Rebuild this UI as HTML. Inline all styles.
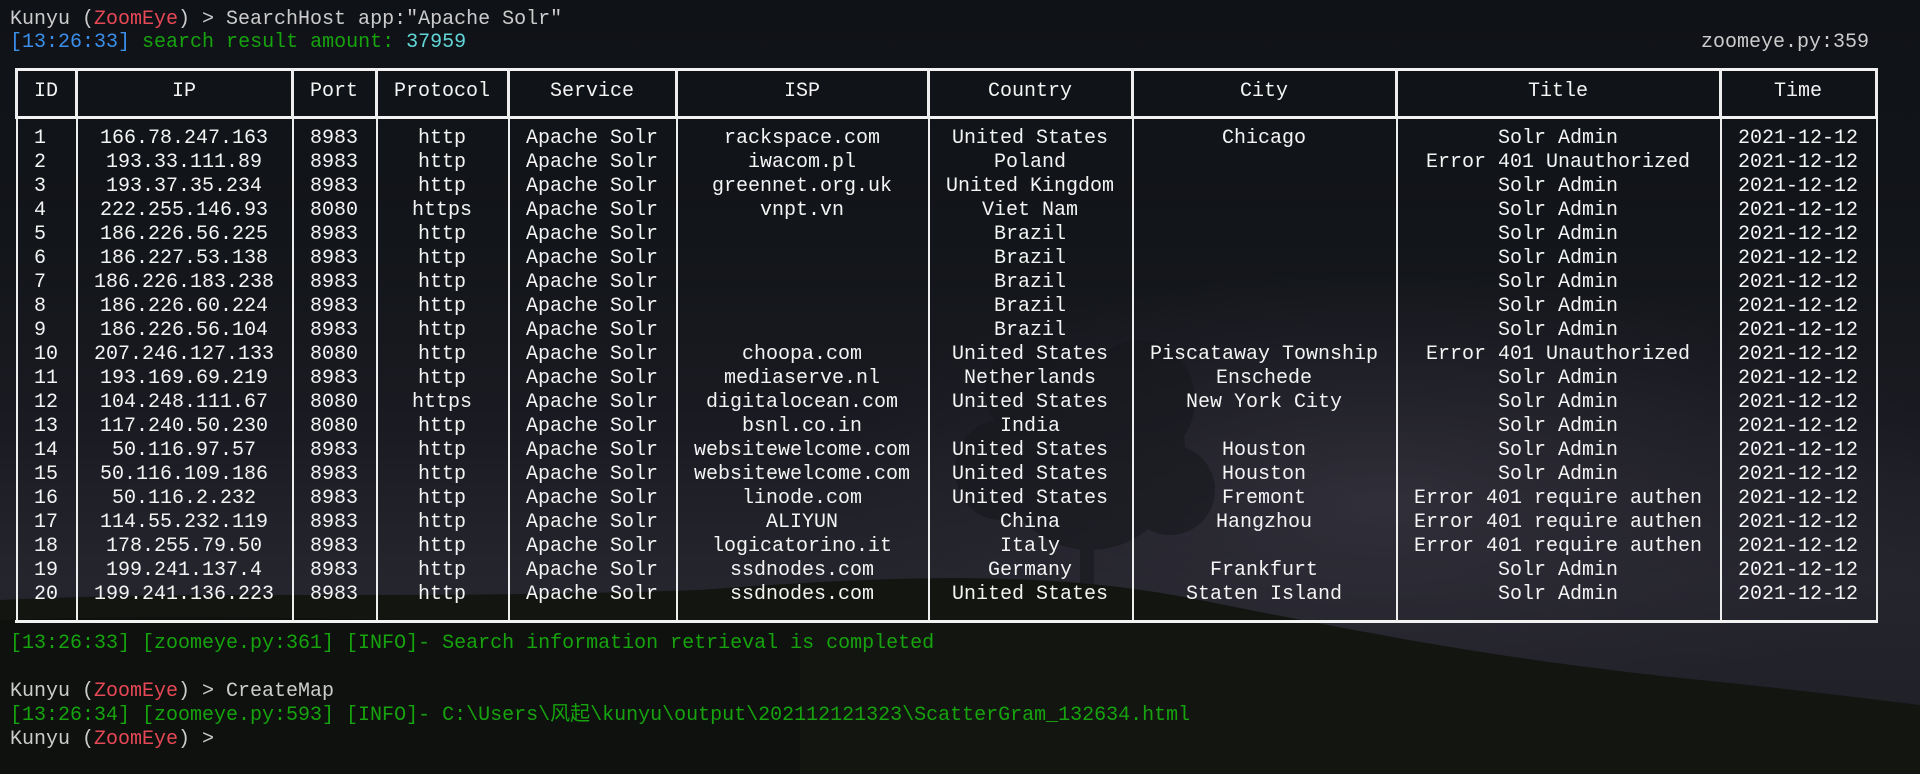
<!DOCTYPE html>
<html><head><meta charset="utf-8"><style>
html,body{margin:0;padding:0;}
body{width:1920px;height:774px;overflow:hidden;position:relative;background:#0f1217;font-family:"Liberation Mono","Noto Sans CJK SC",monospace;font-size:20px;}
.bg{position:absolute;left:0;top:0;}
.l{position:absolute;left:10px;height:24px;line-height:24px;white-space:pre;color:#cccccc;}
.c{position:absolute;height:24px;line-height:24px;white-space:pre;color:#f4f4f4;text-align:center;}
.h{position:absolute;background:#f2f2f2;height:3px;}
.v{position:absolute;background:#eeeeee;}
.r{color:#e74856}.b{color:#3b8eea}.g{color:#16a30e}.cy{color:#61d6d6}
</style></head><body>
<svg class="bg" width="1920" height="774" viewBox="0 0 1920 774">
<defs>
<linearGradient id="sky" x1="0" y1="0" x2="0" y2="1">
<stop offset="0" stop-color="#0f1217"/>
<stop offset="0.3" stop-color="#121519"/>
<stop offset="0.55" stop-color="#1a1b22"/>
<stop offset="0.75" stop-color="#25252e"/>
<stop offset="1" stop-color="#1e1e25"/>
</linearGradient>
<radialGradient id="glow" cx="0.72" cy="0.65" r="0.3">
<stop offset="0" stop-color="#35323d" stop-opacity="0.8"/>
<stop offset="1" stop-color="#2a2933" stop-opacity="0"/>
</radialGradient>
</defs>
<rect width="1920" height="774" fill="url(#sky)"/>
<rect width="1920" height="774" fill="url(#glow)"/>
<g fill="#15171b" opacity="0.55">
<ellipse cx="1090" cy="450" rx="95" ry="100"/>
<ellipse cx="1040" cy="390" rx="55" ry="55"/>
<ellipse cx="1140" cy="400" rx="55" ry="60"/>
<ellipse cx="1000" cy="470" rx="45" ry="50"/>
<ellipse cx="1170" cy="490" rx="45" ry="45"/>
<rect x="1080" y="500" width="14" height="110"/>
</g>
<path d="M0 600 C200 590 400 600 700 590 C900 575 1050 570 1200 600 C1350 630 1500 660 1700 680 C1800 690 1880 700 1920 705 L1920 774 L0 774 Z" fill="#121510"/>
<path d="M0 620 C300 610 500 630 800 620 L800 774 L0 774 Z" fill="#0e110d"/>
</svg>

<div class="l" style="top:8px">Kunyu (<span class="r">ZoomEye</span>) &gt; SearchHost app:"Apache Solr"</div>
<div class="l" style="top:31px"><span class="b">[13:26:33]</span> <span class="g">search result amount:</span> <span class="cy">37959</span></div>
<div class="l" style="top:31px;left:1701px;color:#cccccc">zoomeye.py:359</div>

<div class="h" style="left:15px;width:1863px;top:68px"></div>
<div class="h" style="left:15px;width:1863px;top:116px"></div>
<div class="h" style="left:15px;width:1863px;top:620px"></div>

<div id="vv"></div>
<div id="tbl"></div>

<div class="l g" style="top:632px">[13:26:33] [zoomeye.py:361] [INFO]- Search information retrieval is completed</div>
<div class="l" style="top:680px">Kunyu (<span class="r">ZoomEye</span>) &gt; CreateMap</div>
<div class="l g" style="top:704px">[13:26:34] [zoomeye.py:593] [INFO]- C:\Users\风起\kunyu\output\202112121323\ScatterGram_132634.html</div>
<div class="l" style="top:728px">Kunyu (<span class="r">ZoomEye</span>) &gt;</div>

<script>
var B=[16,76,292,376,508,676,928,1132,1396,1720,1876];
var vv='';
B.forEach(function(x){
 vv+='<div class="v" style="left:'+(x-1)+'px;top:68px;width:3px;height:50px"></div>';
 vv+='<div class="v" style="left:'+(x)+'px;top:118px;width:2px;height:503px"></div>';
});
document.getElementById('vv').innerHTML=vv;
var H=['ID','IP','Port','Protocol','Service','ISP','Country','City','Title','Time'];
var D=[
['1','166.78.247.163','8983','http','Apache Solr','rackspace.com','United States','Chicago','Solr Admin'],
['2','193.33.111.89','8983','http','Apache Solr','iwacom.pl','Poland','','Error 401 Unauthorized'],
['3','193.37.35.234','8983','http','Apache Solr','greennet.org.uk','United Kingdom','','Solr Admin'],
['4','222.255.146.93','8080','https','Apache Solr','vnpt.vn','Viet Nam','','Solr Admin'],
['5','186.226.56.225','8983','http','Apache Solr','','Brazil','','Solr Admin'],
['6','186.227.53.138','8983','http','Apache Solr','','Brazil','','Solr Admin'],
['7','186.226.183.238','8983','http','Apache Solr','','Brazil','','Solr Admin'],
['8','186.226.60.224','8983','http','Apache Solr','','Brazil','','Solr Admin'],
['9','186.226.56.104','8983','http','Apache Solr','','Brazil','','Solr Admin'],
['10','207.246.127.133','8080','http','Apache Solr','choopa.com','United States','Piscataway Township','Error 401 Unauthorized'],
['11','193.169.69.219','8983','http','Apache Solr','mediaserve.nl','Netherlands','Enschede','Solr Admin'],
['12','104.248.111.67','8080','https','Apache Solr','digitalocean.com','United States','New York City','Solr Admin'],
['13','117.240.50.230','8080','http','Apache Solr','bsnl.co.in','India','','Solr Admin'],
['14','50.116.97.57','8983','http','Apache Solr','websitewelcome.com','United States','Houston','Solr Admin'],
['15','50.116.109.186','8983','http','Apache Solr','websitewelcome.com','United States','Houston','Solr Admin'],
['16','50.116.2.232','8983','http','Apache Solr','linode.com','United States','Fremont','Error 401 require authen'],
['17','114.55.232.119','8983','http','Apache Solr','ALIYUN','China','Hangzhou','Error 401 require authen'],
['18','178.255.79.50','8983','http','Apache Solr','logicatorino.it','Italy','','Error 401 require authen'],
['19','199.241.137.4','8983','http','Apache Solr','ssdnodes.com','Germany','Frankfurt','Solr Admin'],
['20','199.241.136.223','8983','http','Apache Solr','ssdnodes.com','United States','Staten Island','Solr Admin']
];
function row(cells,top){
 var s='';
 for(var i=0;i<10;i++){
  var l=B[i]+6,w=B[i+1]-B[i]-12;
  var t=cells[i]||'';
  if(i==0) s+='<div class="c" style="left:34px;top:'+top+'px;text-align:left">'+t+'</div>';
  else s+='<div class="c" style="left:'+l+'px;width:'+w+'px;top:'+top+'px">'+t+'</div>';
 }
 return s;
}
var s=row(H,80);
D.forEach(function(r,i){r.push('2021-12-12');s+=row(r,127+24*i);});
document.getElementById('tbl').innerHTML=s;
</script>
</body></html>
